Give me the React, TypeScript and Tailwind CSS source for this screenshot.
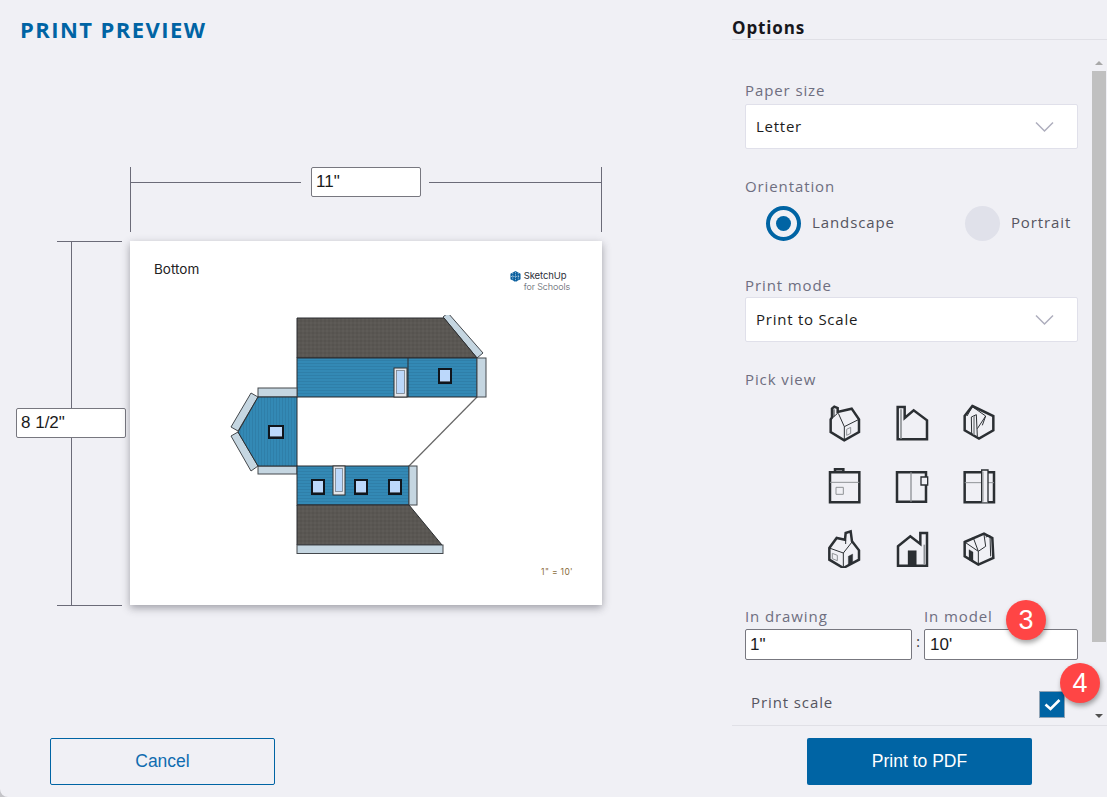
import React from "react";

const sans = "font-['Open_Sans',sans-serif]";

function Chevron() {
  return (
    <svg width="19" height="12" viewBox="0 0 19 12" fill="none" stroke="#aeaebd" strokeWidth="1.5">
      <path d="M1 1.5 L9.5 10 L18 1.5" />
    </svg>
  );
}

function Select({ value }: { value: string }) {
  return (
    <div className="flex h-[45px] w-[333px] items-center justify-between rounded-[2px] border border-[#e0e0ea] bg-white pl-[10px] pr-[23px]">
      <span className="text-[15px] tracking-[0.05em] text-[#1c1c20]">{value}</span>
      <Chevron />
    </div>
  );
}

function Label({ children }: { children: React.ReactNode }) {
  return <div className="text-[15px] leading-[20px] tracking-[0.06em] text-[#6e6e80]">{children}</div>;
}

function DimInput({ value, width }: { value: string; width: string }) {
  return (
    <input
      readOnly
      value={value}
      className={`h-[30px] ${width} rounded-[2px] border border-[#77777f] bg-white pl-[4px] font-['Liberation_Sans',sans-serif] text-[17px] text-[#1b1b1b] outline-none`}
    />
  );
}

function Badge({ n, className }: { n: string; className: string }) {
  return (
    <div
      className={`absolute flex h-[40px] w-[40px] items-center justify-center rounded-full bg-[#ff4545] font-['Liberation_Sans',sans-serif] text-[27px] text-white shadow-[1px_3px_5px_rgba(0,0,0,0.35)] ${className}`}
    >
      {n}
    </div>
  );
}

const dark = "#2b2f33";
const gray = "#8f9296";

const viewIcons: React.ReactNode[] = [
  <>
    <path d="M58 115 L17 90 V52 L21 46 V20 L28 14 L38 18 V30 L80 20 L102 52 V90 Z" />
    <path d="M58 115 V74 L40 34 M17 52 L38 34 M58 74 L102 52 M27 22 V44" strokeWidth="3" />
    <path d="M65 82 L77 76 V94 L65 100 Z" strokeWidth="3" stroke={gray} />
  </>,
  <>
    <path d="M17 15 H38 V48 L65 25 L105 55 V112 H17 Z" />
    <path d="M27 22 V110" stroke={gray} strokeWidth="5" />
  </>,
  <>
    <path d="M40 12 L103 42 V85 L60 110 L17 85 V42 Z" />
    <path d="M37 45 L52 38 L55 103 M37 45 L38 97 M55 80 L80 42 M40 14 L24 42 M40 14 L80 42 M80 42 L70 70" strokeWidth="3" />
    <path d="M45 42 V98" stroke={gray} strokeWidth="5" />
  </>,
  <>
    <path d="M15 22 H103 V112 H15 Z M30 22 V13 H55 V22" />
    <path d="M15 52 H103" stroke={gray} strokeWidth="3" />
    <path d="M33 67 H55 V88 H33 Z" stroke={gray} strokeWidth="3" />
  </>,
  <>
    <path d="M15 22 H102 V110 H15 Z" />
    <path d="M57 22 V110" stroke={gray} strokeWidth="4" />
    <path d="M87 36 H107 V60 H87 Z" fill="#f0f0f5" strokeWidth="4" />
  </>,
  <>
    <path d="M17 22 H105 V112 H17 Z" />
    <path d="M17 53 H68 M87 53 H105" stroke={gray} strokeWidth="3" />
    <path d="M68 112 V15 H87 V112" fill="#f0f0f5" strokeWidth="4" />
    <path d="M72 20 V110" stroke={gray} strokeWidth="3" />
  </>,
  <>
    <path d="M55 120 L13 95 V60 L35 30 L60 35 L62 15 L77 10 L81 40 L102 67 V95 Z" />
    <path d="M55 120 V75 L13 60 M55 75 L81 42 M62 35 V48" strokeWidth="3" />
    <path d="M70 85 L83 78 V105 L70 113 Z" fill={dark} strokeWidth="1" />
    <path d="M22 76 L37 82 V98 L22 92 Z" stroke={gray} strokeWidth="3" />
  </>,
  <>
    <path d="M18 55 L55 25 L85 48 V15 H105 V113 H18 Z" />
    <path d="M48 68 H73 V113 H48 Z" fill={dark} strokeWidth="1" />
    <path d="M97 50 V110" stroke={gray} strokeWidth="5" />
  </>,
  <>
    <path d="M17 42 L75 17 L100 30 L103 90 L58 110 L17 85 Z" />
    <path d="M58 110 V70 L17 42 M58 70 L80 55 L75 20 M80 27 L93 23 L95 85 M42 27 L58 70" strokeWidth="3" />
    <path d="M30 65 L42 72 V102 L30 95 Z" fill={dark} strokeWidth="1" />
  </>,
];

function ViewIcon({ children }: { children: React.ReactNode }) {
  return (
    <svg width="40" height="40" viewBox="0 0 120 120" fill="none" stroke={dark} strokeWidth="7.5" strokeLinejoin="miter">
      {children}
    </svg>
  );
}

function Window({ x, y, w = 15, h = 15 }: { x: number; y: number; w?: number; h?: number }) {
  return (
    <g>
      <rect x={x + 1} y={y + 1} width={w - 2} height={h - 2} fill="#bcd8fb" stroke="#10151c" strokeWidth="2" />
      <rect x={x + 2} y={y + h - 3} width={w - 4} height={1} fill="#5f6b7a" />
    </g>
  );
}

function TallWindow({ x, y, w, h }: { x: number; y: number; w: number; h: number }) {
  return (
    <g>
      <rect x={x} y={y} width={w} height={h} fill="#e4e6ea" stroke="#333" strokeWidth="1" />
      <rect x={x + 2.5} y={y + 2.5} width={w - 5} height={h - 6} fill="#bcd8fb" stroke="#77808c" strokeWidth="0.8" />
    </g>
  );
}

function HouseDrawing() {
  const line = { stroke: "#2a2d30", strokeWidth: 1 };
  const strip = { fill: "#c5d6e1", stroke: "#44484c", strokeWidth: 1 };
  return (
    <svg width="262" height="242" viewBox="228 315 262 242" className="ml-[98px] block">
      <defs>
        <pattern id="roof" width="4" height="4" patternUnits="userSpaceOnUse">
          <rect width="4" height="4" fill="#5a5753" />
          <circle cx="1" cy="1" r="0.7" fill="#4e4b47" />
          <circle cx="3" cy="3" r="0.7" fill="#65625d" />
        </pattern>
        <pattern id="sidingH" width="4" height="3" patternUnits="userSpaceOnUse">
          <rect width="4" height="3" fill="#3389b5" />
          <rect width="4" height="1" fill="#2f7fa9" />
        </pattern>
        <pattern id="sidingV" width="3" height="4" patternUnits="userSpaceOnUse">
          <rect width="3" height="4" fill="#3389b5" />
          <rect width="1" height="4" fill="#2f7fa9" />
        </pattern>
      </defs>

      <path d="M477 397 L409 466" stroke="#666" strokeWidth="1.2" fill="none" />

      {/* top wing */}
      <path d="M443 317 L448 313 L483 353 L477 358 Z" {...strip} />
      <path d="M297 318 H444 L477 358 H297 Z" fill="url(#roof)" {...line} />
      <rect x="297" y="358" width="180" height="39" fill="url(#sidingH)" {...line} />
      <rect x="477" y="358" width="9" height="39" {...strip} />
      <path d="M408 358 V397" {...line} />
      <TallWindow x={394} y={368} w={13} h={29} />
      <Window x={438} y={368} w={14} h={16} />

      {/* left wing */}
      <path d="M231 427 L251 393 L258 397 L238 431 Z" {...strip} />
      <path d="M231 436 L238 432 L258 466 L251 471 Z" {...strip} />
      <rect x="258" y="388" width="39" height="9" {...strip} />
      <rect x="258" y="466" width="39" height="8" {...strip} />
      <path d="M258 397 H297 V466 H258 L238 432 Z" fill="url(#sidingV)" {...line} />
      <Window x={268} y={425} w={16} h={14} />

      {/* bottom wing */}
      <rect x="297" y="466" width="112" height="39" fill="url(#sidingH)" {...line} />
      <rect x="409" y="466" width="8" height="39" {...strip} />
      <TallWindow x={333} y={466} w={12} h={29} />
      <Window x={311} y={479} w={14} h={16} />
      <Window x={354} y={479} w={14} h={16} />
      <Window x={388} y={479} w={14} h={16} />
      <path d="M297 505 H409 L442 545 H297 Z" fill="url(#roof)" {...line} />
      <rect x="297" y="545" width="146" height="8.5" {...strip} />
    </svg>
  );
}

function Logo() {
  return (
    <div className="flex gap-[3px]">
      <svg width="11" height="11" viewBox="0 0 12 12" className="mt-[1px]">
        <path d="M6 0 L11.5 3 V9 L6 12 L0.5 9 V3 Z" fill="#0a5f9e" />
        <path d="M3 2 V11 M6 1 V12 M9 2 V11 M1 6 H11" stroke="#fff" strokeWidth="0.6" strokeDasharray="1.5 1" />
      </svg>
      <div className="font-['Inter',sans-serif] text-[9.5px] leading-[11px] tracking-[-0.01em] text-[#2b2f38]">
        <div>SketchUp</div>
        <div className="text-[9px] font-light text-[#555a66]">for Schools</div>
      </div>
    </div>
  );
}

function Paper() {
  return (
    <div className="h-[364px] w-[472px] bg-white shadow-[0_3px_8px_rgba(60,60,70,0.45)]">
      <div className="flex h-[74px] items-start justify-between pl-[24px] pr-[32px] pt-[20px]">
        <span className="font-['Inter',sans-serif] text-[13.5px] leading-[17px] text-[#222]">Bottom</span>
        <div className="pt-[9px]">
          <Logo />
        </div>
      </div>
      <HouseDrawing />
      <div className="pr-[29px] pt-[10px] text-right font-['Inter',sans-serif] text-[8.5px] leading-[10px] tracking-[0.04em] text-[#8a6d3b]">
        1" = 10'
      </div>
    </div>
  );
}

function LeftPanel() {
  return (
    <div className="flex w-[732px] flex-col">
      <div className="h-[167px] pl-[20px] pt-[14px]">
        <h1 className={`${sans} text-[22px] font-bold leading-[30px] tracking-[0.065em] text-[#0064a4]`}>PRINT PREVIEW</h1>
      </div>

      {/* width dimension */}
      <div className="ml-[130px] h-[65px] w-[472px] border-x border-[#6b6b78]">
        <div className="flex items-center">
          <div className="h-px w-[170px] bg-[#6b6b78]" />
          <div className="ml-[10px] mr-[8px]">
            <DimInput value={'11"'} width="w-[110px]" />
          </div>
          <div className="h-px flex-1 bg-[#6b6b78]" />
        </div>
      </div>

      <div className="mt-[9px] flex">
        {/* height dimension */}
        <div className="ml-[16px] flex h-[365px] w-[114px] flex-col">
          <div className="ml-[41px] h-px w-[65px] bg-[#6b6b78]" />
          <div className="ml-[55px] h-[166px] w-px bg-[#6b6b78]" />
          <DimInput value={'8 1/2"'} width="w-[110px]" />
          <div className="ml-[55px] w-px flex-1 bg-[#6b6b78]" />
          <div className="ml-[41px] h-px w-[65px] bg-[#6b6b78]" />
        </div>
        <Paper />
      </div>

      <div className="mb-[12px] ml-[50px] mt-auto flex h-[47px] w-[225px] items-center justify-center rounded-[2px] border border-[#0064a4] font-['Liberation_Sans',sans-serif] text-[17.5px] text-[#0f6cb0]">
        Cancel
      </div>
    </div>
  );
}

function Scrollbar() {
  return (
    <div className="mr-[1px] flex w-[14px] flex-col items-center pt-[15px]">
      <div className="flex h-[16px] items-center justify-center">
        <div className="h-0 w-0 border-x-[4px] border-b-[4px] border-x-transparent border-b-[#a8a8a8]" />
      </div>
      <div className="h-[571px] w-full bg-[#c0c0c0]" />
      <div className="mt-auto flex h-[16px] items-center justify-center pb-[2px]">
        <div className="h-0 w-0 border-x-[4px] border-t-[4px] border-x-transparent border-t-[#505050]" />
      </div>
    </div>
  );
}

function RightPanel() {
  return (
    <div className={`flex w-[375px] flex-col ${sans}`}>
      <div className="h-[40px] border-b border-[#e0e0e6] pt-[16px] text-[17px] font-bold leading-[24px] tracking-[0.05em] text-[#17171c]">
        Options
      </div>

      <div className="flex h-[686px] justify-between border-b border-[#e0e0e6]">
        <div className="w-[346px] pl-[13px] pt-[40px]">
          <Label>Paper size</Label>
          <div className="mt-[4px]">
            <Select value="Letter" />
          </div>

          <div className="mt-[27px]">
            <Label>Orientation</Label>
          </div>
          <div className="mt-[10px] flex items-center pl-[21px]">
            <div className="flex h-[35px] w-[35px] items-center justify-center rounded-full border-[4px] border-[#0064a4]">
              <div className="h-[15px] w-[15px] rounded-full bg-[#0064a4]" />
            </div>
            <span className="mb-[2px] ml-[11px] text-[15px] tracking-[0.06em] text-[#55555f]">Landscape</span>
            <div className="ml-[70px] h-[35px] w-[35px] rounded-full bg-[#e0e1ea]" />
            <span className="mb-[2px] ml-[11px] text-[15px] tracking-[0.06em] text-[#55555f]">Portrait</span>
          </div>

          <div className="mt-[34px]">
            <Label>Print mode</Label>
          </div>
          <div className="mt-[2px]">
            <Select value="Print to Scale" />
          </div>

          <div className="mt-[27px]">
            <Label>Pick view</Label>
          </div>
          <div className="ml-[80px] mt-[13px] grid w-[174px] grid-cols-[40px_40px_40px] gap-x-[27px] gap-y-[23px]">
            {viewIcons.map((icon, i) => (
              <ViewIcon key={i}>{icon}</ViewIcon>
            ))}
          </div>

          <div className="mt-[38px] flex w-[333px] items-end">
            <div className="w-[167px]">
              <Label>In drawing</Label>
              <input
                readOnly
                value={'1"'}
                className="mt-[3px] h-[31px] w-full rounded-[2px] border border-[#77777f] bg-white pl-[4px] font-['Liberation_Sans',sans-serif] text-[17px] text-[#1b1b1b] outline-none"
              />
            </div>
            <div className="flex w-[12px] justify-center pb-[8px] text-[14px] leading-[20px] text-[#333]">:</div>
            <div className="relative w-[154px]">
              <Label>In model</Label>
              <input
                readOnly
                value="10'"
                className="mt-[3px] h-[31px] w-full rounded-[2px] border border-[#77777f] bg-white pl-[5px] font-['Liberation_Sans',sans-serif] text-[17px] text-[#1b1b1b] outline-none"
              />
              <Badge n="3" className="left-[82px] top-[-6px]" />
            </div>
          </div>

          <div className="mt-[26px] flex w-[320px] items-center justify-between pl-[6px]">
            <span className="text-[15px] tracking-[0.06em] text-[#55555f]">Print scale</span>
            <div className="relative mt-[5px] flex h-[27px] w-[26px] items-center justify-center border border-[#8fa3b5] bg-[#0064a4]">
              <svg width="17" height="13" viewBox="0 0 17 13" fill="none" stroke="#fff" strokeWidth="2.6">
                <path d="M1.5 6.5 L6.5 11 L15.5 2" />
              </svg>
              <Badge n="4" className="left-[20px] top-[-29px]" />
            </div>
          </div>
        </div>
        <Scrollbar />
      </div>

      <div className="flex flex-1 justify-center pt-[12px]">
        <div className="flex h-[47px] w-[225px] items-center justify-center rounded-[2px] bg-[#0064a4] font-['Liberation_Sans',sans-serif] text-[17.5px] text-white">
          Print to PDF
        </div>
      </div>
    </div>
  );
}

export default function App() {
  return (
    <div className="h-[797px] w-[1107px] overflow-hidden bg-[#c4c4c8]">
      <div className="flex h-full w-full rounded-bl-[8px] bg-[#f0f0f5]">
        <LeftPanel />
        <RightPanel />
      </div>
    </div>
  );
}
